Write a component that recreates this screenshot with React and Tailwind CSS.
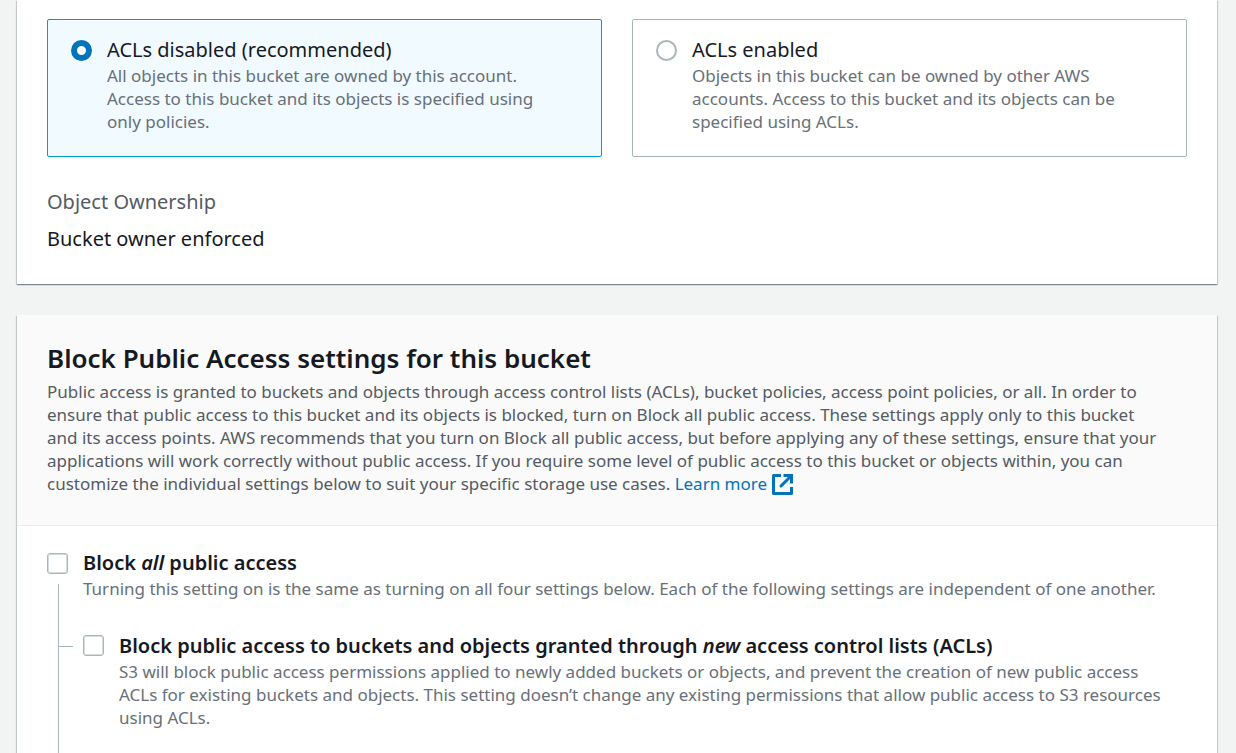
const TITLE = "text-[20px] leading-[29px]";
const DESC = "text-[17px] leading-[23px]";
const CARD =
  "bg-white shadow-[0_1px_1px_rgba(0,28,36,0.3),1px_1px_1px_rgba(0,28,36,0.15),-1px_1px_1px_rgba(0,28,36,0.15)]";
const RADIO =
  "mt-[5px] size-[21px] shrink-0 appearance-none rounded-full border-2 border-[#aab7b8] bg-white checked:border-[6px] checked:border-[#0073bb]";
const CHECKBOX =
  "size-[21px] shrink-0 appearance-none rounded-[3px] border border-[#aab7b8] bg-white shadow-[inset_0_0_0_1px_#d4dbdb] checked:border-[#0073bb] checked:bg-[#0073bb]";

function OptionTile({ id, title, description, defaultChecked }) {
  return (
    <label
      htmlFor={id}
      className="flex gap-[15px] rounded-[2px] border border-[#aab7b8] pt-[15px] pr-[23px] pb-[23px] pl-[23px] has-checked:border-[#00a1c9] has-checked:bg-[#f1faff]"
    >
      <input id={id} type="radio" name="acl" defaultChecked={defaultChecked} className={RADIO} />
      <span className="block">
        <span className={`block text-[#16191f] ${TITLE}`}>{title}</span>
        <span className={`block text-[#687078] ${DESC}`}>{description}</span>
      </span>
    </label>
  );
}

function ExternalIcon() {
  return (
    <svg viewBox="0 0 21 21" fill="none" stroke="currentColor" strokeWidth="3" aria-hidden="true" className="ml-px inline-block size-[21px] align-[-5px]">
      <path d="M9 1.5H1.5v18h18V13" strokeLinejoin="round" />
      <path d="M11.5 1.5h8V9.5" />
      <path d="M18.5 2.5L9 12" strokeLinecap="round" />
    </svg>
  );
}

export default function App() {
  return (
    <div className="flex min-h-screen flex-col gap-[31px] bg-[#f2f3f3] pr-[19px] pl-[17px] font-['Noto_Sans','Open_Sans',sans-serif] text-[#16191f]">
      <section className={`px-[30px] pt-[19px] pb-[30px] ${CARD}`}>
        <div className="grid grid-cols-2 gap-[30px]">
          <OptionTile
            id="acl-disabled"
            title="ACLs disabled (recommended)"
            description={
              <>
                All objects in this bucket are owned by this account.
                <br />
                Access to this bucket and its objects is specified using
                <br />
                only policies.
              </>
            }
            defaultChecked
          />
          <OptionTile
            id="acl-enabled"
            title="ACLs enabled"
            description="Objects in this bucket can be owned by other AWS accounts. Access to this bucket and its objects can be specified using ACLs."
          />
        </div>
        <dl className="mt-[30px] flex flex-col gap-[7px] text-[20px] leading-[30px]">
          <dt className="text-[#545b64]">Object Ownership</dt>
          <dd>Bucket owner enforced</dd>
        </dl>
      </section>

      <section className={`flex grow flex-col ${CARD}`}>
        <header className="border-b border-[#eaeded] bg-[#fafafa] px-[30px] pt-[26px] pb-[30px]">
          <h2 className="text-[26px] leading-[35px] font-semibold">Block Public Access settings for this bucket</h2>
          <p className={`mt-1 text-[#545b64] ${DESC}`}>
            Public access is granted to buckets and objects through access control lists (ACLs), bucket policies, access point policies, or all. In order to ensure that public access to this bucket and its objects is blocked, turn on Block all public access. These settings apply only to this bucket
            <br />
            and its access points. AWS recommends that you turn on Block all public access, but before applying any of these settings, ensure that your
            <br />
            applications will work correctly without public access. If you require some level of public access to this bucket or objects within, you can customize the individual settings below to suit your specific storage use cases.{" "}
            <a href="#learn-more" className="text-[#0073bb]">
              Learn more <ExternalIcon />
            </a>
          </p>
        </header>

        <div className="flex grow px-[30px] pt-[22px]">
          <div className="flex w-[36px] shrink-0 flex-col pt-[5px]">
            <input id="block-all" type="checkbox" className={CHECKBOX} />
            <div className="mt-[10px] ml-[11px] grow border-l border-[#aab7b8]" />
          </div>
          <div className="min-w-0 grow">
            <label htmlFor="block-all" className="block">
              <span className={`block font-semibold ${TITLE}`}>
                Block <em>all</em> public access
              </span>
              <span className={`block text-[#687078] ${DESC}`}>
                Turning this setting on is the same as turning on all four settings below. Each of the following settings are independent of one another.
              </span>
            </label>
            <div className="relative mt-[31px] flex gap-[15px]">
              <span className="absolute top-[15px] -left-6 w-[14px] border-t border-[#aab7b8]" />
              <input id="block-new-acls" type="checkbox" className={`mt-[4px] ${CHECKBOX}`} />
              <label htmlFor="block-new-acls" className="block">
                <span className={`block font-semibold ${TITLE}`}>
                  Block public access to buckets and objects granted through <em>new</em> access control lists (ACLs)
                </span>
                <span className={`block text-[#687078] ${DESC}`}>
                  S3 will block public access permissions applied to newly added buckets or objects, and prevent the creation of new public access
                  <br />
                  ACLs for existing buckets and objects. This setting doesn’t change any existing permissions that allow public access to S3 resources
                  <br />
                  using ACLs.
                </span>
              </label>
            </div>
          </div>
        </div>
      </section>
    </div>
  );
}
